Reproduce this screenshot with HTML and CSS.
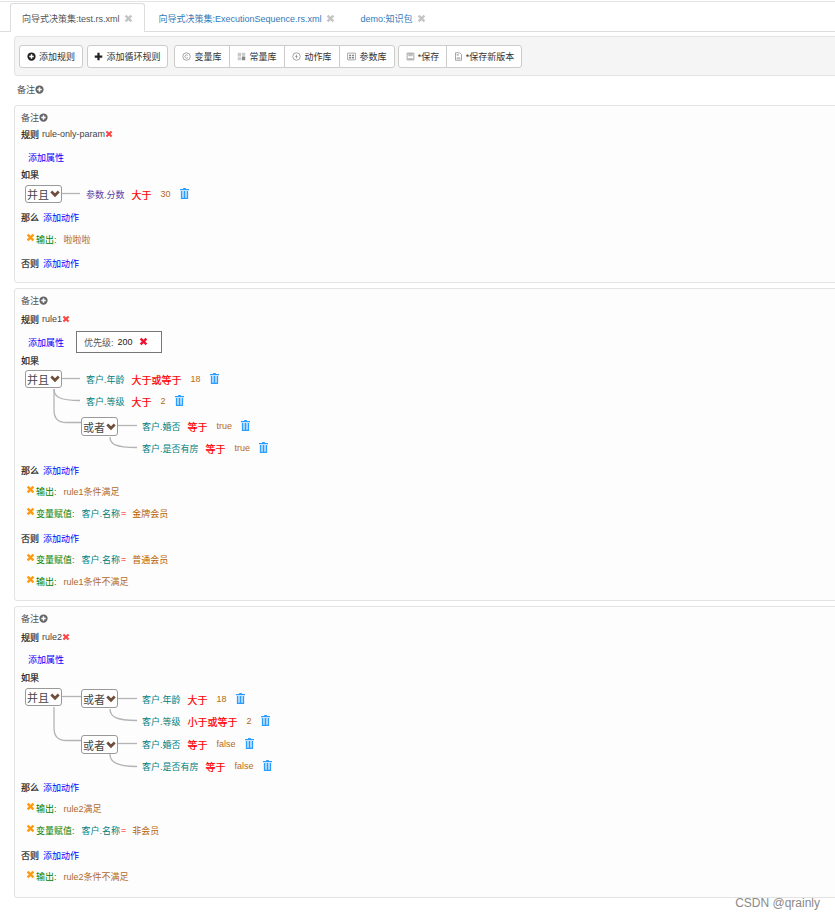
FILE: index.html
```html
<!DOCTYPE html>
<html lang="zh-CN">
<head>
<meta charset="utf-8">
<title>向导式决策集</title>
<link rel="stylesheet" href="styles.css">
</head>
<body>
<svg class="defs" width="0" height="0" aria-hidden="true">
  <symbol id="i-x" viewBox="0 0 12 12"><path d="M1 3.2 3.2 1 6 3.8 8.800 1 11 3.200 8.200 6 11 8.800 8.800 11 6 8.200 3.200 11 1 8.800 3.800 6z" fill="currentColor"/></symbol>
  <symbol id="i-trash" viewBox="0 0 10 12"><path d="M3.500 1V0h3v1H10v1.500H0V1z" fill="currentColor"/><path d="M1 3.300h8V12H1z" fill="#a9d6ff"/><path d="M1 3.300h1.200V12H1zM7.800 3.300H9V12H7.800zM4.400 3.300h1.200V12H4.400zM1 10.800h8V12H1z" fill="currentColor"/></symbol>
  <symbol id="i-cplus" viewBox="0 0 12 12"><path d="M6 .5a5.500 5.500 0 1 1 0 11 5.500 5.500 0 0 1 0-11zM5 3v2H3v2h2v2h2V7h2V5H7V3z" fill="currentColor" fill-rule="evenodd"/></symbol>
  <symbol id="i-plus" viewBox="0 0 12 12"><path d="M4.500 1h3v3.500H11v3H7.500V11h-3V7.500H1v-3h3.500z" fill="currentColor"/></symbol>
  <symbol id="i-chev" viewBox="0 0 12 9"><path d="M1.500 1.500 6 6l4.500-4.500" fill="none" stroke="currentColor" stroke-width="3.200"/></symbol>
  <symbol id="i-var" viewBox="0 0 12 12"><circle cx="6" cy="6" r="5" fill="none" stroke="currentColor"/><path d="M7.800 4.600A2.200 2.200 0 1 0 7.800 7.400" fill="none" stroke="currentColor"/></symbol>
  <symbol id="i-const" viewBox="0 0 12 12"><path d="M1 1h4.500v5H1zM1 7h4.500v4H1z" fill="currentColor" opacity=".45"/><path d="M6.500 1H11v4H6.500z" fill="currentColor" opacity=".45"/><path d="M6.500 6H11v5H6.500z" fill="currentColor"/></symbol>
  <symbol id="i-act" viewBox="0 0 12 12"><circle cx="6" cy="6" r="5" fill="none" stroke="currentColor"/><path d="M6.700 2.700 4.200 6.500h1.500L5.300 9.300 7.800 5.500H6.300z" fill="currentColor"/></symbol>
  <symbol id="i-grid" viewBox="0 0 12 12"><rect x=".5" y="1.500" width="11" height="9" rx="1" fill="none" stroke="currentColor"/><path d="M2.500 3.500h3v2h-3zM6.500 3.500h3v2h-3zM2.500 6.500h3v2h-3zM6.500 6.500h3v2h-3z" fill="currentColor"/></symbol>
  <symbol id="i-save" viewBox="0 0 12 12"><path d="M1.500 1.500h9v9h-9z" fill="none" stroke="currentColor"/><path d="M3 2h6v3.500H3zM3 8h6v2H3z" fill="currentColor" opacity=".55"/></symbol>
  <symbol id="i-saveas" viewBox="0 0 12 12"><path d="M2 1h5.500L10 3.500V11H2z" fill="none" stroke="currentColor"/><path d="M3.500 2.500h3v2.500h-3zM3.500 7h5v2.500h-5z" fill="currentColor" opacity=".55"/></symbol>
</svg>

<div class="page">
  <nav class="tabs">
    <a class="tab tab-active">向导式决策集:test.rs.xml<svg class="tab-x"><use href="#i-x"/></svg></a>
    <a class="tab">向导式决策集:ExecutionSequence.rs.xml<svg class="tab-x"><use href="#i-x"/></svg></a>
    <a class="tab">demo:知识包<svg class="tab-x"><use href="#i-x"/></svg></a>
  </nav>

  <div class="toolbar">
    <button class="btn btn-a"><svg class="ico ico-dark"><use href="#i-cplus"/></svg>添加规则</button>
    <button class="btn btn-b"><svg class="ico ico-dark"><use href="#i-plus"/></svg>添加循环规则</button>
    <div class="btn-group group-lib">
      <button class="btn btn-lib"><svg class="ico"><use href="#i-var"/></svg>变量库</button>
      <button class="btn btn-lib"><svg class="ico"><use href="#i-const"/></svg>常量库</button>
      <button class="btn btn-lib"><svg class="ico"><use href="#i-act"/></svg>动作库</button>
      <button class="btn btn-lib"><svg class="ico"><use href="#i-grid"/></svg>参数库</button>
    </div>
    <div class="btn-group group-save">
      <button class="btn btn-save"><svg class="ico"><use href="#i-save"/></svg>*保存</button>
      <button class="btn btn-saveas"><svg class="ico"><use href="#i-saveas"/></svg>*保存新版本</button>
    </div>
  </div>

  <div class="remark remark-top">备注<svg class="note-ico"><use href="#i-cplus"/></svg></div>

  <!-- Rule 1 -->
  <section class="panel">
    <div class="ln remark">备注<svg class="note-ico"><use href="#i-cplus"/></svg></div>
    <div class="ln m3"><b class="kw">规则</b><span class="rname">rule-only-param</span><svg class="del"><use href="#i-x"/></svg></div>
    <div class="ln m9"><a class="link attr">添加属性</a></div>
    <div class="ln m3"><b class="kw">如果</b></div>
    <div class="tree m4">
      <svg class="wires" width="200" height="18"><path d="M37 8.500H55"/></svg>
      <div class="joint"><span class="sel">并且<svg class="chev"><use href="#i-chev"/></svg></span></div>
      <div class="kids">
        <div class="cond"><span class="param">参数.分数</span><span class="op">大于</span><span class="val">30</span><svg class="trash"><use href="#i-trash"/></svg></div>
      </div>
    </div>
    <div class="ln m7"><b class="kw">那么</b><a class="link add">添加动作</a></div>
    <div class="ln m8 act"><svg class="act-x"><use href="#i-x"/></svg><span class="fn">输出:</span><span class="val out">啦啦啦</span></div>
    <div class="ln m10"><b class="kw">否则</b><a class="link add">添加动作</a></div>
  </section>

  <!-- Rule 2 -->
  <section class="panel">
    <div class="ln remark">备注<svg class="note-ico"><use href="#i-cplus"/></svg></div>
    <div class="ln m5"><b class="kw">规则</b><span class="rname">rule1</span><svg class="del"><use href="#i-x"/></svg></div>
    <div class="ln m9"><a class="link attr">添加属性</a><span class="prop">优先级:<span class="prop-v">200</span><svg class="prop-x"><use href="#i-x"/></svg></span></div>
    <div class="ln m4"><b class="kw">如果</b></div>
    <div class="tree m3">
      <svg class="wires" width="300" height="90">
        <path d="M37 8.500H55"/>
        <path d="M29 19C29 27 35 30.500 55 30.500"/>
        <path d="M29 19V40Q29 52.500 41 52.500H56"/>
        <path d="M93 55.500H112"/>
        <path d="M85 67C85 74 90 77.500 112 77.500"/>
      </svg>
      <div class="joint"><span class="sel">并且<svg class="chev"><use href="#i-chev"/></svg></span></div>
      <div class="kids">
        <div class="cond"><span class="var">客户.年龄</span><span class="op">大于或等于</span><span class="val">18</span><svg class="trash"><use href="#i-trash"/></svg></div>
        <div class="cond g4"><span class="var">客户.等级</span><span class="op">大于</span><span class="val">2</span><svg class="trash"><use href="#i-trash"/></svg></div>
        <div class="sub g7">
          <div class="joint"><span class="sel">或者<svg class="chev"><use href="#i-chev"/></svg></span></div>
          <div class="kids">
            <div class="cond"><span class="var">客户.婚否</span><span class="op">等于</span><span class="val">true</span><svg class="trash"><use href="#i-trash"/></svg></div>
            <div class="cond g4"><span class="var">客户.是否有房</span><span class="op">等于</span><span class="val">true</span><svg class="trash"><use href="#i-trash"/></svg></div>
          </div>
        </div>
      </div>
    </div>
    <div class="ln m6"><b class="kw">那么</b><a class="link add">添加动作</a></div>
    <div class="ln m7 act"><svg class="act-x"><use href="#i-x"/></svg><span class="fn">输出:</span><span class="val out">rule1条件满足</span></div>
    <div class="ln m8 act"><svg class="act-x"><use href="#i-x"/></svg><span class="fn">变量赋值:</span><span class="var assign">客户.名称</span><span class="eq">=</span><span class="val str">金牌会员</span></div>
    <div class="ln m11"><b class="kw">否则</b><a class="link add">添加动作</a></div>
    <div class="ln m7 act"><svg class="act-x"><use href="#i-x"/></svg><span class="fn">变量赋值:</span><span class="var assign">客户.名称</span><span class="eq">=</span><span class="val str">普通会员</span></div>
    <div class="ln m8 act"><svg class="act-x"><use href="#i-x"/></svg><span class="fn">输出:</span><span class="val out">rule1条件不满足</span></div>
  </section>

  <!-- Rule 3 -->
  <section class="panel panel-last">
    <div class="ln remark">备注<svg class="note-ico"><use href="#i-cplus"/></svg></div>
    <div class="ln m5"><b class="kw">规则</b><span class="rname">rule2</span><svg class="del"><use href="#i-x"/></svg></div>
    <div class="ln m8"><a class="link attr">添加属性</a></div>
    <div class="ln m4"><b class="kw">如果</b></div>
    <div class="tree m4">
      <svg class="wires" width="300" height="90">
        <path d="M37 8.500H56"/>
        <path d="M29 19V40Q29 52.500 41 52.500H56"/>
        <path d="M93 10.500H112"/>
        <path d="M85 21C85 28 90 32.500 112 32.500"/>
        <path d="M93 55.500H112"/>
        <path d="M85 66C85 73 90 78.500 112 78.500"/>
      </svg>
      <div class="joint"><span class="sel">并且<svg class="chev"><use href="#i-chev"/></svg></span></div>
      <div class="kids">
        <div class="sub g1">
          <div class="joint"><span class="sel">或者<svg class="chev"><use href="#i-chev"/></svg></span></div>
          <div class="kids">
            <div class="cond g1"><span class="var">客户.年龄</span><span class="op">大于</span><span class="val">18</span><svg class="trash"><use href="#i-trash"/></svg></div>
            <div class="cond g4"><span class="var">客户.等级</span><span class="op">小于或等于</span><span class="val">2</span><svg class="trash"><use href="#i-trash"/></svg></div>
          </div>
        </div>
        <div class="sub g5">
          <div class="joint"><span class="sel">或者<svg class="chev"><use href="#i-chev"/></svg></span></div>
          <div class="kids">
            <div class="cond"><span class="var">客户.婚否</span><span class="op">等于</span><span class="val">false</span><svg class="trash"><use href="#i-trash"/></svg></div>
            <div class="cond g4"><span class="var">客户.是否有房</span><span class="op">等于</span><span class="val">false</span><svg class="trash"><use href="#i-trash"/></svg></div>
          </div>
        </div>
      </div>
    </div>
    <div class="ln m5"><b class="kw">那么</b><a class="link add">添加动作</a></div>
    <div class="ln m7 act"><svg class="act-x"><use href="#i-x"/></svg><span class="fn">输出:</span><span class="val out">rule2满足</span></div>
    <div class="ln m8 act"><svg class="act-x"><use href="#i-x"/></svg><span class="fn">变量赋值:</span><span class="var assign">客户.名称</span><span class="eq">=</span><span class="val str">非会员</span></div>
    <div class="ln m11"><b class="kw">否则</b><a class="link add">添加动作</a></div>
    <div class="ln m7 act"><svg class="act-x"><use href="#i-x"/></svg><span class="fn">输出:</span><span class="val out">rule2条件不满足</span></div>
  </section>

  <div class="watermark">CSDN @qrainly</div>
</div>
</body>
</html>
```

FILE: styles.css
```css
* { box-sizing: border-box; }
html, body { margin: 0; padding: 0; background: #fff; }
body {
  font-family: "Liberation Sans", "Noto Sans CJK SC", sans-serif;
  font-size: 9px;
  color: #333;
  overflow: hidden;
}
.defs { position: absolute; }
.page { position: relative; height: 919px; overflow: hidden; padding-top: 1px; }

/* tabs */
.tabs {
  display: flex;
  height: 31px;
  padding: 1px 0 0 10px;
  border-top: 1px solid #e4e4e4;
  border-bottom: 1px solid #ddd;
}
.tab {
  display: flex;
  align-items: center;
  height: 29px;
  padding: 0 11px;
  margin-right: 2px;
  border: 1px solid transparent;
  border-bottom: 0;
  border-radius: 3px 3px 0 0;
  color: #337ab7;
  white-space: nowrap;
}
.tab-active {
  height: 29px;
  background: #fff;
  border-color: #ddd;
  color: #555;
  box-shadow: 0 1px 0 #fff;
}
.tab-x { width: 9px; height: 9px; margin-left: 4px; color: #c4c4c4; }

/* toolbar */
.toolbar {
  display: flex;
  align-items: center;
  height: 40px;
  margin: 4px -10px 0 14px;
  padding: 0 0 0 4px;
  background: #f5f5f5;
  border: 1px solid #e3e3e3;
  border-radius: 3px;
}
.btn {
  display: flex;
  align-items: center;
  justify-content: center;
  height: 23px;
  padding: 0;
  background: #fff;
  border: 1px solid #ccc;
  border-radius: 3px;
  color: #333;
  font: inherit;
  white-space: nowrap;
}
.btn-a { width: 64px; }
.btn-b { width: 81px; margin-left: 4px; }
.btn-group { display: flex; }
.btn-group .btn { border-radius: 0; margin-left: -1px; }
.btn-group .btn:first-child { border-radius: 3px 0 0 3px; margin-left: 0; }
.btn-group .btn:last-child { border-radius: 0 3px 3px 0; }
.group-lib { margin-left: 6px; }
.group-save { margin-left: 3px; }
.btn-lib { width: 56px; }
.btn-save { width: 49px; }
.btn-saveas { width: 76px; }
.ico { width: 9px; height: 9px; margin-right: 3px; color: #888; flex: none; }
.ico-dark { color: #222; }

/* remark */
.remark { display: flex; align-items: center; color: #555; }
.remark-top { height: 14px; margin: 6px 0 0 17px; }
.note-ico { width: 9px; height: 9px; color: #666; }

/* panels */
.panel {
  margin: 9px -10px 0 14px;
  padding: 4px 6px 12px;
  background: #fdfdfd;
  border: 1px solid #e3e3e3;
  border-radius: 3px;
}
.panel + .panel { margin-top: 5px; }
.panel-last { padding-bottom: 14px; }
.ln { display: flex; align-items: center; height: 14px; white-space: nowrap; }
.m3 { margin-top: 3px; }
.m4 { margin-top: 4px; }
.m5 { margin-top: 5px; }
.m6 { margin-top: 6px; }
.m7 { margin-top: 7px; }
.m8 { margin-top: 8px; }
.m9 { margin-top: 9px; }
.m10 { margin-top: 10px; }
.m11 { margin-top: 11px; }
.g1 { margin-top: 1px; }
.g4 { margin-top: 4px; }
.g5 { margin-top: 5px; }
.g7 { margin-top: 7px; }

.kw { font-weight: normal; color: #222; -webkit-text-stroke: .2px #222; }
.rname { margin-left: 3px; color: #444; }
.del { width: 8px; height: 8px; color: #f44; flex: none; }
.link { color: #00f; }
.attr { margin-left: 7px; }
.add { margin-left: 4px; }

.prop {
  display: flex;
  align-items: center;
  width: 86px;
  height: 22px;
  margin-left: 12px;
  padding-left: 7px;
  border: 1px solid #777;
  background: #fff;
  color: #555;
}
.prop-v { margin-left: 4px; color: #222; }
.prop-x { width: 9px; height: 9px; margin: -2px 0 0 6px; color: #f01030; }

/* condition tree */
.tree { position: relative; display: flex; margin-left: 4px; }
.wires {
  position: absolute;
  left: 0;
  top: 0;
  pointer-events: none;
}
.wires path { fill: none; stroke: #b4b4b4; stroke-width: 1.3; }
.joint { flex: none; width: 56px; }
.sel {
  display: flex;
  align-items: center;
  justify-content: space-between;
  width: 37px;
  height: 18px;
  padding: 0 1px;
  background: #fff;
  border: 1px solid #999;
  border-radius: 3px;
  font-size: 11px;
  color: #444;
}
.sub .sel { height: 19px; }
.chev { width: 10px; height: 8px; color: #6f4e3c; flex: none; }
.kids { display: flex; flex-direction: column; }
.sub { display: flex; }
.cond { display: flex; align-items: center; height: 18px; padding-left: 5px; white-space: nowrap; }
.param { color: #5a3ea5; }
.var { color: #008080; }
.op { margin-left: 7px; color: #f00; font-size: 10px; -webkit-text-stroke: .2px #f00; }
.cond .val { margin-left: 9px; }
.val { color: #b86a14; }
.trash { width: 9px; height: 11px; margin: -2px 0 0 9px; color: #2a9dff; flex: none; }

/* actions */
.act { padding-left: 5px; }
.act-x { width: 9px; height: 9px; margin: -4px 1px 0 0; color: #ff9a10; flex: none; }
.fn { color: #008000; }
.out { margin-left: 7px; color: #b06a2a; }
.assign { margin-left: 7px; }
.eq { margin-left: 1px; color: #f00; }
.str { margin-left: 6px; color: #b86000; }

.watermark {
  position: absolute;
  right: 15px;
  top: 896px;
  font-family: "Liberation Sans", sans-serif;
  font-size: 12px;
  color: #8a8a8a;
}
```
